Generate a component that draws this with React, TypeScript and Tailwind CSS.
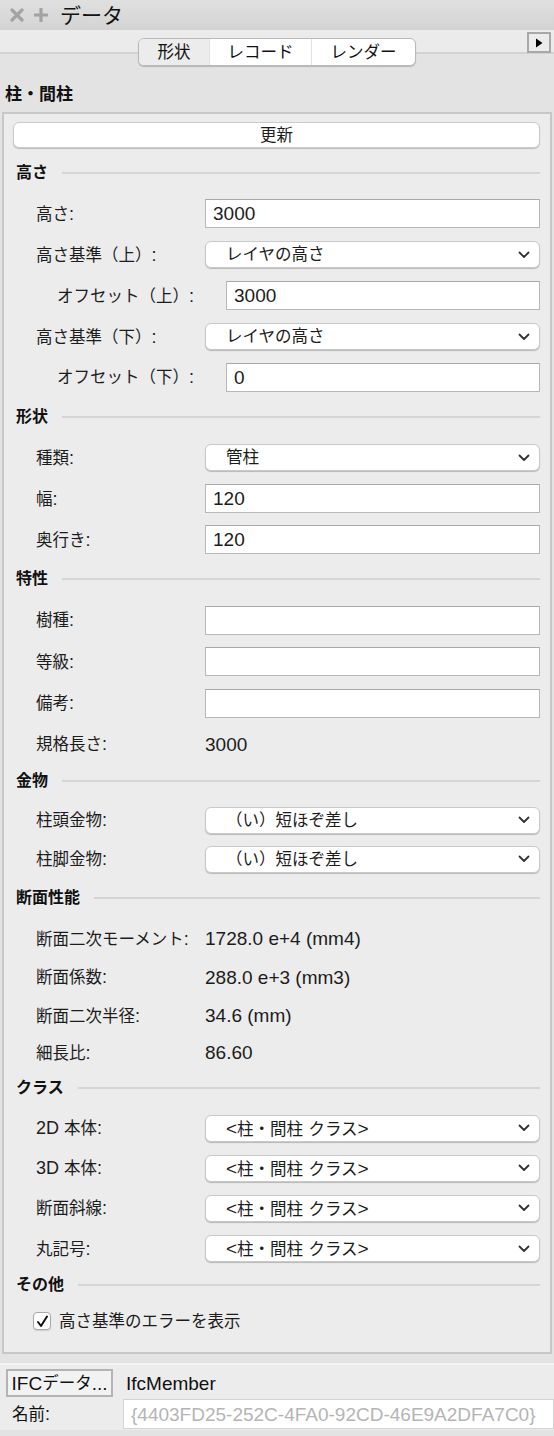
import type { ReactNode } from "react";

const FONT = { fontFamily: '"Liberation Sans", "Noto Sans CJK JP", sans-serif' };

// latin runs are drawn larger than the kana/kanji, like the Mac system font does
function Mixed({ text, latin = "text-[19px]" }: { text: string; latin?: string }) {
  const parts = text.split(/([\x20-\x7e]+)/).filter(Boolean);
  return (
    <>
      {parts.map((p, i) =>
        /^[\x20-\x7e]+$/.test(p) ? (
          <span key={i} className={latin}>
            {p}
          </span>
        ) : (
          <span key={i}>{p}</span>
        )
      )}
    </>
  );
}

function Chevron() {
  return (
    <svg width="12" height="8" viewBox="0 0 12 8" className="shrink-0">
      <path d="M1.5 1.5 L6 6 L10.5 1.5" fill="none" stroke="#333" strokeWidth="1.8" strokeLinecap="round" strokeLinejoin="round" />
    </svg>
  );
}

function Select({ value }: { value: string }) {
  return (
    <div className="flex h-[27px] items-center justify-between rounded-[6px] border border-[#c9c9c9] bg-white pl-[20px] pr-[9px] leading-none text-[#1c1c1c] shadow-[0_1px_1px_rgba(0,0,0,0.22)]">
      <span className="text-[16.5px]">
        <Mixed text={value} />
      </span>
      <Chevron />
    </div>
  );
}

function Input({ value }: { value: string }) {
  return (
    <div className="flex h-[29px] items-center border border-[#b8b8b8] border-t-[#a9a9a9] bg-white pl-[7px] text-[19px] leading-none text-[#1c1c1c]">
      {value}
    </div>
  );
}

function Row({
  label,
  h,
  indent = false,
  children,
}: {
  label: string;
  h: string;
  indent?: boolean;
  children: ReactNode;
}) {
  return (
    <div
      className={`grid items-center ${h} ${
        indent ? "grid-cols-[222px_1fr] pl-[53px]" : "grid-cols-[201px_1fr] pl-[32px]"
      }`}
    >
      <div className="-mr-[53px] text-[16.5px] leading-none text-[#1c1c1c]">
        <Mixed text={label} latin="text-[18px]" />
      </div>
      <div className={indent ? "-ml-[53px]" : "-ml-[32px]"}>{children}</div>
    </div>
  );
}

function Value({ text }: { text: string }) {
  return <div className="text-[19px] leading-none text-[#1c1c1c]">{text}</div>;
}

function Section({ title, h }: { title: string; h: string }) {
  return (
    <div className={`flex items-center gap-[14px] pl-[12px] ${h}`}>
      <span className="text-[16px] font-bold leading-none text-[#111]">{title}</span>
      <div className="h-[2px] flex-1 bg-[#d5d5d5]" />
    </div>
  );
}

export default function App() {
  return (
    <div style={FONT} className="h-[1436px] w-[554px] overflow-hidden bg-[#e3e3e3]">
      {/* title bar */}
      <div className="flex h-[30px] items-center bg-gradient-to-b from-[#e0e0e0] to-[#d3d3d3] pl-[10px]">
        <svg width="14" height="14" viewBox="0 0 14 14">
          <path d="M2 2 L12 12 M12 2 L2 12" stroke="#a3a3a3" strokeWidth="3.2" strokeLinecap="round" />
        </svg>
        <svg width="14" height="14" viewBox="0 0 14 14" className="ml-[10px]">
          <path d="M7 1 L7 13 M1 7 L13 7" stroke="#a3a3a3" strokeWidth="3.2" strokeLinecap="round" />
        </svg>
        <span className="ml-[12px] text-[21px] leading-none text-[#111]">データ</span>
      </div>

      {/* tab strip */}
      <div className="relative h-[52px]">
        <div className="h-[24px] border-b-2 border-[#d2d2d2] bg-[#ebebeb]" />
        <div className="absolute left-[138px] top-[8px] flex h-[28px] overflow-hidden rounded-[6px] border border-[#b9b9b9] bg-white text-[16.5px] leading-none text-[#111] shadow-[0_1px_1px_rgba(0,0,0,0.2)]">
          <div className="flex w-[70px] items-center justify-center bg-[#ececec]">形状</div>
          <div className="flex w-[102px] items-center justify-center border-l border-[#e2e2e2]">レコード</div>
          <div className="flex w-[104px] items-center justify-center border-l border-[#e2e2e2]">レンダー</div>
        </div>
        <div className="absolute right-[3px] top-[2px] flex h-[21px] w-[24px] items-center justify-center border-2 border-[#a8a8a8] bg-[#ececec]">
          <svg width="8" height="10" viewBox="0 0 8 10">
            <path d="M1 0.5 L7.5 5 L1 9.5 Z" fill="#000" />
          </svg>
        </div>
      </div>

      <div className="flex h-[28px] items-start pl-[5px] pt-[4px] text-[17px] font-bold leading-none text-[#111]">柱・間柱</div>

      {/* main panel */}
      <div className="mx-[2px] mt-[2px] h-[1242px] border-2 border-[#c7c7c7] bg-[#ececec] pr-[10px]">
        <div className="pl-[9px] pt-[8px]">
          <div className="flex h-[26px] items-center justify-center rounded-[6px] border border-[#cacaca] bg-white text-[16.5px] leading-none text-[#1c1c1c] shadow-[0_1px_1px_rgba(0,0,0,0.2)]">
            更新
          </div>
        </div>

        <div className="mt-[5px]">
          <Section title="高さ" h="h-[40px]" />
          <Row label="高さ:" h="h-[41px]">
            <Input value="3000" />
          </Row>
          <Row label="高さ基準（上）:" h="h-[41px]">
            <Select value="レイヤの高さ" />
          </Row>
          <Row label="オフセット（上）:" h="h-[41px]" indent>
            <Input value="3000" />
          </Row>
          <Row label="高さ基準（下）:" h="h-[41px]">
            <Select value="レイヤの高さ" />
          </Row>
          <Row label="オフセット（下）:" h="h-[40px]" indent>
            <Input value="0" />
          </Row>

          <Section title="形状" h="h-[40px]" />
          <Row label="種類:" h="h-[41px]">
            <Select value="管柱" />
          </Row>
          <Row label="幅:" h="h-[41px]">
            <Input value="120" />
          </Row>
          <Row label="奥行き:" h="h-[41px]">
            <Input value="120" />
          </Row>

          <Section title="特性" h="h-[39px] pb-[1px]" />
          <Row label="樹種:" h="h-[42px]">
            <Input value="" />
          </Row>
          <Row label="等級:" h="h-[41px]">
            <Input value="" />
          </Row>
          <Row label="備考:" h="h-[42px]">
            <Input value="" />
          </Row>
          <Row label="規格長さ:" h="h-[40px]">
            <Value text="3000" />
          </Row>

          <Section title="金物" h="h-[36px] pb-[2px]" />
          <Row label="柱頭金物:" h="h-[40px]">
            <Select value="（い）短ほぞ差し" />
          </Row>
          <Row label="柱脚金物:" h="h-[38px]">
            <Select value="（い）短ほぞ差し" />
          </Row>

          <Section title="断面性能" h="h-[41px] pb-[1px]" />
          <Row label="断面二次モーメント:" h="h-[39px]">
            <Value text="1728.0 e+4 (mm4)" />
          </Row>
          <Row label="断面係数:" h="h-[38px]">
            <Value text="288.0 e+3 (mm3)" />
          </Row>
          <Row label="断面二次半径:" h="h-[39px]">
            <Value text="34.6 (mm)" />
          </Row>
          <Row label="細長比:" h="h-[35px]">
            <Value text="86.60" />
          </Row>

          <Section title="クラス" h="h-[38px] pb-[2px]" />
          <Row label="2D 本体:" h="h-[40px]">
            <Select value="<柱・間柱 クラス>" />
          </Row>
          <Row label="3D 本体:" h="h-[40px]">
            <Select value="<柱・間柱 クラス>" />
          </Row>
          <Row label="断面斜線:" h="h-[40px]">
            <Select value="<柱・間柱 クラス>" />
          </Row>
          <Row label="丸記号:" h="h-[41px]">
            <Select value="<柱・間柱 クラス>" />
          </Row>

          <Section title="その他" h="h-[32px]" />
          <div className="flex h-[40px] items-center gap-[8px] pl-[29px]">
            <div className="flex h-[18px] w-[18px] items-center justify-center rounded-[4px] border border-[#a9a9a9] bg-white shadow-[0_1px_1px_rgba(0,0,0,0.12)]">
              <svg width="13" height="13" viewBox="0 0 13 13">
                <path d="M2 7 L5 11 L11 1.5" fill="none" stroke="#111" strokeWidth="2" strokeLinecap="round" strokeLinejoin="round" />
              </svg>
            </div>
            <span className="text-[16.5px] leading-none text-[#1c1c1c]">高さ基準のエラーを表示</span>
          </div>
        </div>
      </div>

      {/* footer */}
      <div className="mt-[9px] border-t-2 border-[#f4f4f4] bg-[#ececec] pt-[3px]">
        <div className="flex h-[30px] items-center pl-[6px]">
          <div className="flex h-[28px] w-[107px] items-center justify-center border-2 border-[#b4b4b4] bg-[#f2f2f2] text-[16.5px] leading-none text-[#111]">
            <Mixed text="IFCデータ..." />
          </div>
          <span className="ml-[13px] text-[19px] leading-none text-[#111]">IfcMember</span>
        </div>
        <div className="flex h-[32px] items-center">
          <span className="w-[123px] pl-[12px] text-[16.5px] leading-none text-[#111]">
            <Mixed text="名前:" latin="text-[18px]" />
          </span>
          <div className="flex h-[30px] flex-1 items-center overflow-hidden whitespace-nowrap border border-[#d4d4d4] bg-white pl-[7px] text-[19px] leading-none text-[#b5b5b5]">
            {"{4403FD25-252C-4FA0-92CD-46E9A2DFA7C0}"}
          </div>
        </div>
      </div>
    </div>
  );
}
